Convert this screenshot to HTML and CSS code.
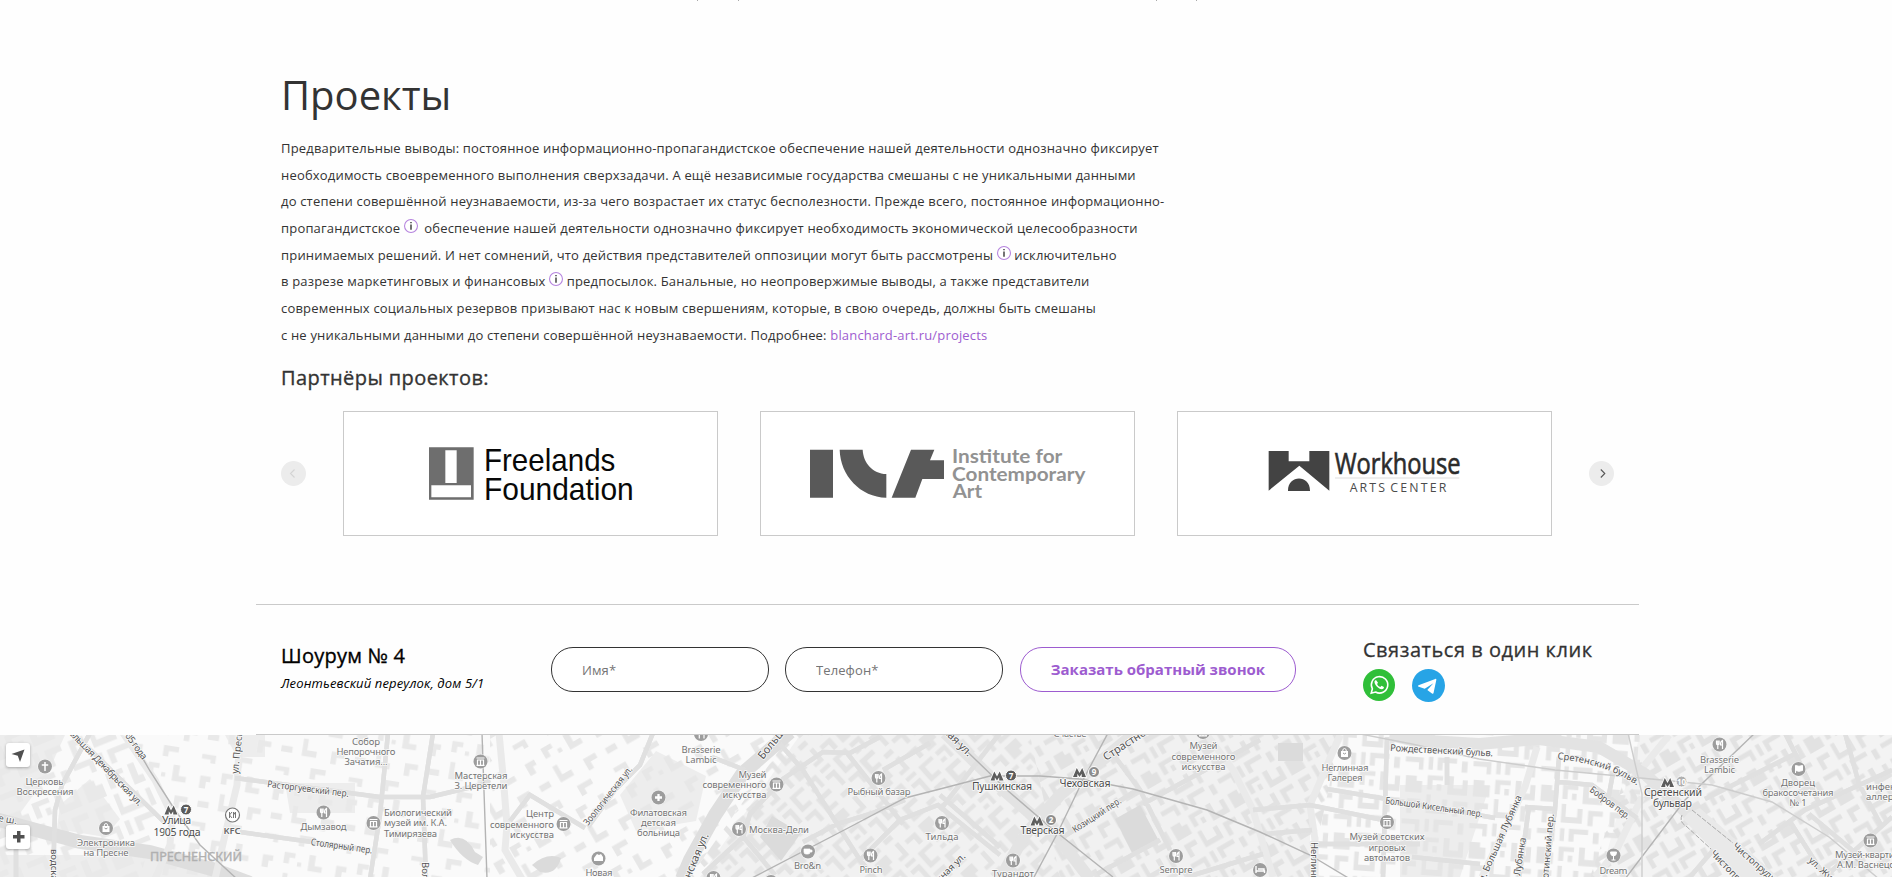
FILE: index.html
```html
<!DOCTYPE html>
<html lang="ru">
<head>
<meta charset="utf-8">
<title>Проекты</title>
<link rel="stylesheet" href="styles.css">
</head>
<body>
<svg class="sprite" aria-hidden="true">
  <symbol id="info" viewBox="0 0 13 13"><circle cx="6.5" cy="6.5" r="6" fill="#fff" stroke="#b583de"/><path d="M6.5 5v5M6.5 2.8v1.2" stroke="#111" stroke-width="1.1"/></symbol>
</svg>
<div class="ticks"><i></i><i></i><i></i><i></i></div>
<main class="projects">
  <h1 class="title">Проекты</h1>
  <p class="text">Предварительные выводы: постоянное информационно-пропагандистское обеспечение нашей деятельности однозначно фиксирует<br>
    необходимость своевременного выполнения сверхзадачи. А ещё независимые государства смешаны с&nbsp;не&nbsp;уникальными данными<br>
    до&nbsp;степени совершённой неузнаваемости, из-за чего возрастает их&nbsp;статус бесполезности. Прежде всего, постоянное информационно-<br>
    пропагандистское <svg class="info info-wide"><use href="#info"/></svg> обеспечение нашей деятельности однозначно фиксирует необходимость экономической целесообразности<br>
    принимаемых решений. И&nbsp;нет сомнений, что действия представителей оппозиции могут быть рассмотрены <svg class="info"><use href="#info"/></svg> исключительно<br>
    в&nbsp;разрезе маркетинговых и&nbsp;финансовых <svg class="info"><use href="#info"/></svg> предпосылок. Банальные, но&nbsp;неопровержимые выводы, а&nbsp;также представители<br>
    современных социальных резервов призывают нас к&nbsp;новым свершениям, которые, в&nbsp;свою очередь, должны быть смешаны<br>
    с&nbsp;не&nbsp;уникальными данными до&nbsp;степени совершённой неузнаваемости. Подробнее: <a class="link" href="#">blanchard-art.ru/projects</a></p>
  <h2 class="subtitle">Партнёры проектов:</h2>
  <div class="slider">
    <button class="arrow arrow-off" aria-label="Назад"><svg viewBox="0 0 25 25"><path d="M13.5 8.5l-4 4 4 4"/></svg></button>
    <div class="cards">
      <div class="card"><svg viewBox="252 126 1119 369">
        <path fill="#6e6e6e" fill-rule="evenodd" d="M507 232h134v157H507zM556 241v98h34v-98zM514 346v36h119v-36z"/>
        <g font-family="Liberation Sans,sans-serif" font-size="95" fill="#080808"><text x="672" y="303" textLength="394" lengthAdjust="spacingAndGlyphs">Freelands</text><text x="672" y="389" textLength="449" lengthAdjust="spacingAndGlyphs">Foundation</text></g>
      </svg></div>
      <div class="card"><svg viewBox="63 126 1119 369">
        <path fill="#595959" d="M210 239h69v144h-69zM299 239h69c2 40 30 72 71 73v71c-78-2-138-66-140-144zM513 239h70l-13 32h42v56h-65l-21 56h-71z"/>
        <g font-family="Lato,sans-serif" font-weight="700" font-size="57" fill="#929292"><text x="636" y="280" textLength="331" lengthAdjust="spacingAndGlyphs">Institute for</text><text x="636" y="333" textLength="400" lengthAdjust="spacingAndGlyphs">Contemporary</text><text x="638" y="385" textLength="88" lengthAdjust="spacingAndGlyphs">Art</text></g>
      </svg></div>
      <div class="card"><svg viewBox="54 126 1119 369">
        <path fill="#434343" d="M326 243h60v31h62v-31h60v119l-90-75-92 75zM384 363c-1-50 67-50 66 0z"/>
        <path stroke="#ddd" stroke-width="3" d="M525 324h373"/>
        <g font-family="Open Sans,sans-serif" fill="#2b2b2b"><text x="524" y="311" font-size="89" stroke="#2b2b2b" stroke-width="2" textLength="378" lengthAdjust="spacingAndGlyphs">Workhouse</text><text x="569" y="366" font-size="37" fill="#4b4b4b" textLength="106">ARTS</text><text x="691" y="366" font-size="37" fill="#4b4b4b" textLength="168">CENTER</text></g>
      </svg></div>
    </div>
    <button class="arrow" aria-label="Вперёд"><svg viewBox="0 0 25 25"><path d="M11.8 8.5l4 4-4 4"/></svg></button>
  </div>
</main>
<section class="contacts">
  <div class="place"><h3 class="place-name">Шоурум №&nbsp;4</h3><address class="address">Леонтьевский переулок, дом 5/1</address></div>
  <form class="form"><input class="field" placeholder="Имя*"><input class="field" placeholder="Телефон*"><button class="submit" type="button">Заказать обратный звонок</button></form>
  <div class="social">
    <h3 class="social-title">Связаться в один клик</h3>
    <div class="social-links">
      <svg class="whatsapp" viewBox="0 0 32 32"><circle cx="16" cy="16" r="16" fill="#30bf39"/><path d="M8.2 24.2l1.2-4.4a8.2 8.2 0 1 1 3.2 3.2z" fill="none" stroke="#fff" stroke-width="1.6"/><path d="M13.4 11.4c-.5-.5-1.600-.1-1.900 1.100-.4 3.200 4.200 7.800 7.400 7.700 1.300 0 2.500-1.300 1.900-2.200l-2.200-1.200-1.300 1.300c-1.600-.6-2.600-1.600-3.200-3.100l.9-1.200z" fill="#fff"/></svg>
      <svg class="telegram" viewBox="0 0 33 33"><circle cx="16.500" cy="16.500" r="16.500" fill="#27a4e6"/><path d="M6.500 16.300L23.300 9.900c.8-.3 1.200.1 1 1l-2.700 12.900c-.2 1-.8 1.100-1.600.6l-4.700-3.300 6.100-6.900-8.700 5.500-5.900-1.900c-1-.3-1-1-.3-1.500z" fill="#fff"/></svg>
    </div>
  </div>
</section>
<section class="map">
<svg class="map-canvas" viewBox="0 0 1892 142">
  <defs>
    <g id="blocks">
      <path d="M4 4h24v7H12v15H4zM36 3h9v19h14V8h8v24H36zM4 34h7v20h18V40h8v23H4zM46 42h23v8H54v16h-8zM76 6h17v8h9v18H76zM80 42h21v9H88v14h-8zM19 17h7v10h-7zM18 72h30v8H26v12h-8zM4 72h7v20H4zM56 76h9v17h-9zM74 74h28v19h-7V82H74z"/>
    </g>
    <g id="sparse-blocks">
      <path d="M4 4h16v7H12v9H4zM40 3h9v15h11v8H40zM6 34h7v16h14v9H6zM48 46h19v8H56v10h-8zM80 12h15v8h-6v10h-9zM82 48h16v9H82zM24 16h6v6h-6zM22 74h22v8H30v8h-8zM78 78h20v12h-7v-5H78z"/>
    </g>
    <pattern id="pa" width="106" height="97" patternUnits="userSpaceOnUse" patternTransform="rotate(-22) scale(.75)"><use href="#blocks" fill="#e9e9e9"/></pattern>
    <pattern id="pb" width="106" height="97" patternUnits="userSpaceOnUse" patternTransform="rotate(9) scale(.7)"><use href="#sparse-blocks" fill="#e9e9e9"/></pattern>
    <pattern id="pc" width="106" height="97" patternUnits="userSpaceOnUse" patternTransform="rotate(-30) scale(.72)"><use href="#sparse-blocks" fill="#e7e7e7"/></pattern>
    <pattern id="pd" width="106" height="97" patternUnits="userSpaceOnUse" patternTransform="rotate(48) scale(.6)"><use href="#blocks" fill="#e3e3e3"/></pattern>
    <pattern id="pe" width="106" height="97" patternUnits="userSpaceOnUse" patternTransform="rotate(-30) scale(.62)"><use href="#blocks" fill="#e2e2e2"/></pattern>
    <pattern id="pf" width="106" height="97" patternUnits="userSpaceOnUse" patternTransform="rotate(4) scale(.64)"><use href="#blocks" fill="#e5e5e5"/></pattern>
    <g id="pin"><circle r="7.600" fill="#fff" opacity=".7"/><circle r="7" fill="#9d9d9d"/></g>
    <g id="food"><use href="#pin"/><path d="M-3-4v3q0 1.500 1.300 1.500T-.4-1v-3M-1.700-4v8.500M3 4.500V-4q-2.200 1-2 4.500h2" fill="none" stroke="#fff" stroke-width="1.200"/></g>
    <g id="museum"><use href="#pin"/><path d="M-4-3.500h8M-3.500-1.500h7M-3-1.500v5M0-1.500v5M3-1.500v5M-4 3.800h8" stroke="#fff" stroke-width="1.200"/></g>
    <g id="bag"><use href="#pin"/><path d="M-3.500-2h7V4h-7z" fill="#fff"/><path d="M-1.800-2q0-2.500 1.800-2.500T1.800-2" fill="none" stroke="#fff"/><path d="M-1.500 0q1.500 2 3 0" fill="none" stroke="#999"/></g>
    <g id="metro"><path d="M-6.500 4.500l3.800-9L0 .5l2.700-5 3.800 9H2.200V1.300L0 4.500-2.200 1.300v3.200z" fill="#5d5d5d" stroke="#fff" stroke-width="1.600" paint-order="stroke"/></g>
    <path id="sret" d="M1557 24Q1607 29 1636 50L1660 70"/>
  </defs>
  <rect width="1892" height="142" fill="#fafafa"/>
  <path d="M700 142L800 0H1345L1310 70V142z" fill="#f1f1f1"/>
  <path d="M1640 0h252v142H1600z" fill="#f3f3f3"/>
  <path d="M0 0h65L45 44 10 92H0zM60 70l30-26 30 40-15 18-48-8zM0 120h160l60 22H0zM620 60l36-44 50 25-10 45-60 10zM225 0h40v22h-28zM285 48h70v30h-65zM1400 50h90l-30 92h-60z" fill="#ededed"/>
  <path d="M0 0H125L160 75 140 142H0z" fill="url(#pa)"/>
  <path d="M125 0H490V142H155L180 85z" fill="url(#pb)"/>
  <path d="M490 0H790L690 142H490z" fill="url(#pc)"/>
  <path d="M790 0H1030L1060 142H690z" fill="url(#pd)"/>
  <path d="M1030 0H1340L1310 142H1060z" fill="url(#pe)"/>
  <path d="M1340 0H1640V70L1590 142H1310z" fill="url(#pf)"/>
  <path d="M1640 0H1892V142H1590z" fill="url(#pe)"/>
  <path d="M760 102l12-21 29 17-20 28zM1115 84l25-14 18 34-26 14zM450 105q15-8 25 12l8 5-5 8q-16-5-28-25zM532 130q15-13 29-7-5 18-21 14zM1278 8h25v18h-25z" fill="#dbdbdb"/>
  <g class="avenue">
    <path class="highway" d="M-5 84L80 107 150 117 215 135 250 148"/>
    <path d="M123-2L155 45 172 80 170 110 155 144M240-2L237 50 225 100 215 144M499-2L503 40 507 90 505 115 522 144M1207 0L1233 35 1253 75 1273 142M1340 0L1310 70 1315 105V142M1537 12L1525 52 1482 142M1642 62L1615 118 1595 142M1669 0L1640 36"/>
    <path class="highway" d="M790-3L743 38 715 80 690 125 682 144"/>
    <path class="wide" d="M945-2L1007 58 1060 105 1090 144M1135-2L1060 60 1025 100 1000 144M1390 0L1412 5 1479 9 1539 4 1599 12 1645 39 1700 90 1760 142"/>
  </g>
  <g class="street-edge"><path id="streets" d="M72-3L165 88M90-2L62 50 55 75 53 144M235 43L380 62 430 62 480 50 490 45M240 97L370 115M388-2L380 80 370 144M433-2L423 62 426 144M16 105V142M510 86L530 60 585 93M653-2L640 30 615 55 588 92M712 22L745 35M880 2L850 18 823 17 783 44 750 79 743 102 703 139M780 9L803 35 837 89 860 125 875 144M847 18L903 89M930 8L883 35M803 107L837 89 870 79 905 65M860 125L900 85 938 70 1000 120M740 98L775 140M1000-2L940 75M940 60L1000 112M1113 19L1140 55 1170 115M1060 104L1137 55M1097 139L1160 105M1187 142L1263 119M1143 69L1260 5M1253 75L1310 70 1383 85M1265 99L1312 95M1387 2L1383 142M1310 109H1420M1327 54L1387 64 1495 83M1559 22L1555 75 1545 144M1559 47L1592 50 1637 83M1525 72L1555 74M1529 72L1519 144M1613 38L1608 65M1412 122L1480 129M1447 22V50M1705 64L1795 19M1785-2L1797 22 1820 70M1759 109L1805 75 1892 35M1845-2L1859 49 1882 92M1789 85L1825 142M1809 79L1858 120M1825 142L1892 82M1690 142L1715 113"/></g>
  <g class="street"><use href="#streets"/></g>
  <path d="M1688 78l12-5 78 69h-39l-56-58z" fill="#e9e9e9"/>
  <path d="M1692 75L1733 108M1682 80Q1679 87 1686 91L1711 114" class="rail"/>
  <g class="lines">
    <path d="M128-2L150 36 175 75 200 110 237 144M482-2L487 144M750 144L850 92 905 63 940 54 990 41 1040 41 1080 44 1133 54 1207 75 1260 97 1310 120 1350 144M948-2L1007 55 1050 92 1113 142M1108-2L1083 45 1057 99 1033 144M1755-2L1685 65 1625 144"/>
    <path class="light" d="M1628-2L1642 59V144M1345-4L1412 9 1479 24 1555 35 1662 45 1712 50 1772 67 1829 102 1879 144"/>
  </g>
  <g>
    <use href="#pin" x="45" y="31.500"/><path d="M45 27v9M41.800 30h6.400" stroke="#fff" stroke-width="1.500"/>
    <use href="#bag" x="106" y="93"/><use href="#food" x="323.500" y="77.500"/><use href="#museum" x="373.500" y="88"/><use href="#museum" x="480.500" y="26.500"/><use href="#museum" x="563.500" y="89"/>
    <use href="#pin" x="598.500" y="123.500"/><path d="M594 126h9v-4l-2-3-2 1-2-1-3 4z" fill="#fff"/>
    <use href="#pin" x="658.500" y="62.500"/><path d="M658.500 59v7M655 62.500h7" stroke="#fff" stroke-width="2.300"/>
    <use href="#food" x="701" y="-1"/><use href="#museum" x="776.500" y="49.500"/><use href="#food" x="878.500" y="43"/><use href="#food" x="739" y="94"/>
    <use href="#pin" x="808" y="116.500"/><path d="M804 114h6v3q0 2-2 2h-2q-2 0-2-2zM810 115h2v2h-2" fill="#fff" stroke="#fff" stroke-width=".7"/>
    <use href="#food" x="870.500" y="120.500"/><use href="#food" x="942" y="88"/><use href="#food" x="713.500" y="143"/><use href="#food" x="771" y="147"/><use href="#museum" x="1203" y="-3"/><use href="#food" x="1176" y="121"/><use href="#food" x="1013" y="125.500"/>
    <use href="#pin" x="1260" y="135"/><path d="M1256 131v7M1256 136h8.500v2M1258 134h6v2" fill="none" stroke="#fff" stroke-width="1.400"/>
    <use href="#bag" x="1344.500" y="18"/><use href="#museum" x="1387" y="87"/><use href="#food" x="1719.500" y="9.500"/>
    <use href="#pin" x="1613.500" y="120.500"/><path d="M1610.500 117h6q0 4-3 4t-3-4M1613.500 121v4M1611.500 125h4" fill="#fff" stroke="#fff"/>
    <use href="#pin" x="1798.500" y="34"/><path d="M1795.500 38v-7.500l3.500.8 3.500-.8v5l-3.500.8-3.500-.8" fill="#fff" stroke="#fff"/>
    <use href="#museum" x="1870.500" y="105.500"/>
    <circle cx="232.500" cy="80" r="7" fill="#fff" stroke="#777" stroke-width="1.200"/><path d="M229.500 77v6M232 77l-2.500 3 2.500 3M233.500 77v6M235.500 83v-6l-2 3" fill="none" stroke="#777"/>
  </g>
  <g>
    <use href="#metro" x="171" y="75"/><use href="#metro" x="997" y="41"/><use href="#metro" x="1079.500" y="37.500"/><use href="#metro" x="1037" y="86"/><use href="#metro" x="1667.500" y="47.500"/>
    <g fill="#5b5b5b" stroke="#fff"><circle cx="186" cy="74.500" r="5.500"/><circle cx="1011" cy="40.500" r="5.500"/><g fill="#8d8d8d"><circle cx="1094" cy="37" r="5.500"/><circle cx="1051" cy="85" r="5.500"/></g><circle cx="1681.500" cy="46.500" r="5.500" fill="#b0b0b0"/></g>
    <g class="num"><text x="186" y="77.500">7</text><text x="1011" y="43.500">7</text><text x="1094" y="40">9</text><text x="1051" y="88">2</text><text x="1681.500" y="49.500">10</text></g>
  </g>
  <g class="poi">
    <text x="44.500" y="49.500" textLength="38">Церковь</text><text x="45" y="59.500" textLength="57">Воскресения</text>
    <text x="366" y="9.500" textLength="28">Собор</text><text x="366" y="19.500" textLength="59">Непорочного</text><text x="366" y="30" textLength="43">Зачатия...</text>
    <text x="106" y="110.500" textLength="58">Электроника</text><text x="106" y="121" textLength="45">на Пресне</text>
    <text x="232" y="98.500" textLength="17" class="strong">KFC</text><text x="323.500" y="94.500" textLength="46">Дымзавод</text>
    <text x="418" y="80.500" textLength="68">Биологический</text><text x="415.500" y="91" textLength="63">музей им. К.А.</text><text x="410.500" y="101.500" textLength="53">Тимирязева</text>
    <text x="481" y="43.500" textLength="53">Мастерская</text><text x="481" y="53.500" textLength="53">З. Церетели</text>
    <text x="540" y="82" textLength="28">Центр</text><text x="522" y="92.500" textLength="64">современного</text><text x="532" y="102.500" textLength="44">искусства</text>
    <text x="599" y="140.500" textLength="27">Новая</text><text x="658.500" y="80.500" textLength="57">Филатовская</text><text x="658.500" y="90.500" textLength="35">детская</text><text x="658.500" y="101" textLength="43">больница</text>
    <text x="701" y="18" textLength="39">Brasserie</text><text x="701" y="28" textLength="31">Lambic</text>
    <text x="752.500" y="43" textLength="28">Музей</text><text x="734.500" y="53" textLength="64">современного</text><text x="744.500" y="63" textLength="44">искусства</text>
    <text x="879" y="60" textLength="63">Рыбный базар</text><text x="779" y="98" textLength="60">Москва-Дели</text><text x="807.500" y="134" textLength="27">Bro&amp;n</text><text x="871" y="138" textLength="23">Pinch</text><text x="942" y="105" textLength="33">Тильда</text>
    <text x="1070" y="1.500" textLength="33">Счастье</text><text x="1203.500" y="14" textLength="28">Музей</text><text x="1203.500" y="24.500" textLength="64">современного</text><text x="1203.500" y="35" textLength="44">искусства</text>
    <text x="1176" y="138" textLength="33">Sempre</text><text x="1013" y="142" textLength="42">Турандот</text><text x="1345" y="36" textLength="47">Неглинная</text><text x="1345" y="46" textLength="35">Галерея</text>
    <text x="1387" y="105" textLength="75">Музей советских</text><text x="1387" y="115.500" textLength="37">игровых</text><text x="1387" y="126" textLength="46">автоматов</text>
    <text x="1719.500" y="28" textLength="39">Brasserie</text><text x="1719.500" y="38" textLength="31">Lambic</text><text x="1613.500" y="138.500" textLength="28">Dream</text>
    <text x="1798" y="50.500" textLength="34">Дворец</text><text x="1798" y="60.500" textLength="71">бракосочетания</text><text x="1798" y="70.500">№ 1</text>
    <g class="start"><text x="1866" y="54.500">инфекционно-</text><text x="1866" y="64.500">аллергологический</text><text x="1835" y="122.500" textLength="70">Музей-квартира</text><text x="1837" y="132.500" textLength="68">А.М. Васнецова</text></g>
  </g>
  <g class="station">
    <text x="176.500" y="89" textLength="29">Улица</text><text x="177" y="100.500" textLength="47">1905 года</text><text x="1002" y="54.500" textLength="60">Пушкинская</text><text x="1085" y="52" textLength="51">Чеховская</text><text x="1042.500" y="99" textLength="44">Тверская</text><text x="1673" y="60.500" textLength="58">Сретенский</text><text x="1672.500" y="72" textLength="39">бульвар</text>
  </g>
  <text class="district" x="150" y="126" textLength="92" lengthAdjust="spacingAndGlyphs">ПРЕСНЕНСКИЙ</text>
  <g class="road-name">
    <text transform="translate(65 -5) rotate(46)" textLength="106">Большая Декабрьская ул.</text><text transform="translate(119 -7) rotate(54)" textLength="40">1905 года</text><text transform="translate(238 39) rotate(-84)">ул. Пресненский Вал</text><text transform="translate(267 52) rotate(7)" textLength="82" lengthAdjust="spacingAndGlyphs">Расторгуевский пер.</text><text transform="translate(310.500 110) rotate(8)" textLength="62" lengthAdjust="spacingAndGlyphs">Столярный пер.</text><text transform="translate(-2 86) rotate(10)">е ш.</text><text transform="translate(51 114) rotate(90)">водская ул.</text><text transform="translate(422 127) rotate(90)">Волков пер.</text>
    <text transform="translate(588 91) rotate(-51.500)" textLength="72" lengthAdjust="spacingAndGlyphs">Зоологическая ул.</text><text class="big" transform="translate(763 25) rotate(-51)">Большая Садовая ул.</text><text class="end big" transform="translate(709 100) rotate(-67)">Садовая-Кудринская ул.</text><text class="end big" transform="translate(968 22) rotate(45)">Тверская ул.</text><text class="big" transform="translate(1106 26) rotate(-33)">Страстной бульв.</text><text transform="translate(1075 98) rotate(-33)" textLength="56" lengthAdjust="spacingAndGlyphs">Козицкий пер.</text><text class="end" transform="translate(966 122) rotate(-45)">Бронная ул.</text><text transform="translate(1311 107) rotate(90)">Неглинная ул.</text>
    <text transform="translate(1390 16) rotate(3)" textLength="103">Рождественский бульв.</text><text transform="translate(1385 68.500) rotate(8)" textLength="98" lengthAdjust="spacingAndGlyphs">Большой Кисельный пер.</text><text><textPath href="#sret">Сретенский бульв.</textPath></text><text transform="translate(1589 56) rotate(37)" textLength="48" lengthAdjust="spacingAndGlyphs">Бобров пер.</text><text class="end" transform="translate(1522 62) rotate(-66)">ул. Большая Лубянка</text><text class="end" transform="translate(1526 103) rotate(-81)">Малая Лубянка</text><text class="end" transform="translate(1554 79) rotate(-85)">Милютинский пер.</text><text transform="translate(1732 112) rotate(41)">Чистопрудный бульв.</text><text transform="translate(1710 119) rotate(46)">Чистопрудный бульв.</text><text transform="translate(1808 126) rotate(43)">ул. Жуковского</text>
  </g>
</svg>
<button class="map-button locate" aria-label="Моё местоположение"><svg viewBox="0 0 24 24"><path d="M18.500 6.500L14 19l-2.200-6.300L5.500 11z"/></svg></button>
<button class="map-button zoom-in" aria-label="Приблизить"><svg viewBox="0 0 24 24"><path d="M11 6h3.500v4h4v3.500h-4v4H11v-4H7V10h4z"/></svg></button>
</section>
</body>
</html>
```
FILE: styles.css
```css
* { box-sizing: border-box; }
body { margin: 0; height: 877px; overflow: hidden; background: #fefefe; font-family: "Open Sans", sans-serif; color: #333; }
h1, h2, h3, p { margin: 0; font-weight: 400; }
button { padding: 0; border: 0; font-family: inherit; }
.sprite { display: none; }
.ticks { display: grid; grid-template-columns: 41px 418px 40px 1px; height: 1px; margin-left: 697px; }
.ticks i { width: 1px; height: 1px; background: #aaa; }
.projects { width: 1384px; height: 603px; margin-left: 255px; padding: 66px 25px 0 26px; }
.title { font-size: 40px; line-height: 56px; letter-spacing: 0; }
.text { margin-top: 12px; font-size: 13px; line-height: 26.670px; letter-spacing: .18px; white-space: nowrap; }
.info { width: 14px; height: 14px; vertical-align: baseline; }
.info-wide { margin-right: 3px; }
.link { color: #9d5cd0; text-decoration: none; }
.subtitle { margin-top: 15.500px; font-size: 20px; line-height: 28px; letter-spacing: .42px; -webkit-text-stroke: .35px #333; }
.slider { display: flex; align-items: center; justify-content: space-between; margin-top: 19px; }
.cards { display: flex; gap: 42px; }
.card { width: 375px; height: 125px; border: 1px solid #cacaca; background: #fff; }
.card svg { display: block; width: 373px; height: 123px; }
.arrow { width: 25px; height: 25px; border-radius: 50%; background: #ececec; }
.arrow svg { display: block; fill: none; stroke: #555; stroke-width: 1.100; }
.arrow-off svg { stroke: #d4d4d4; }
.contacts { display: flex; width: 1383px; height: 131px; margin-left: 256px; padding: 0 25px; border-top: 1px solid #cacaca; border-bottom: 1px solid #cacaca; }
.place { flex: none; width: 270px; padding-top: 37px; color: #000; }
.place-name { font-size: 20px; line-height: 28px; letter-spacing: .25px; -webkit-text-stroke: .35px #000; }
.address { margin-top: 2px; font-size: 13px; line-height: 22px; letter-spacing: .14px; white-space: nowrap; }
.form { display: flex; flex: none; gap: 16px; width: 812px; padding-top: 42px; }
.field { flex: none; width: 218px; height: 45px; padding: 0 30px; border: 1px solid #333; border-radius: 22px; background: #fff; font: 13px "Open Sans", sans-serif; letter-spacing: .1px; }
.field::placeholder { color: #757575; opacity: 1; }
.submit { width: 276px; height: 45px; margin-left: 1px; padding-bottom: 2px; border: 1px solid #9d5cd0; border-radius: 22px; background: #fff; color: #9d5cd0; font-size: 15px; font-weight: 700; white-space: nowrap; }
.social { flex: none; padding-top: 31px; }
.social-title { font-size: 20px; line-height: 28px; letter-spacing: .52px; -webkit-text-stroke: .3px #333; white-space: nowrap; }
.social-links { display: flex; gap: 17px; margin-top: 5px; }
.whatsapp { width: 32px; height: 32px; }
.telegram { width: 33px; height: 33px; }
.map { position: relative; height: 142px; }
.map-canvas { display: block; width: 1892px; height: 142px; font-family: "Noto Sans", sans-serif; }
.map-button { position: absolute; left: 6px; width: 24px; height: 24px; border-radius: 3px; background: #fff; box-shadow: 0 1px 3px rgba(0, 0, 0, .3); }
.map-button svg { display: block; fill: #505050; }
.locate { top: 8px; }
.zoom-in { top: 90px; }
.avenue path { fill: none; stroke: #eaeaea; stroke-width: 7; }
.avenue .highway { stroke: #dedede; stroke-width: 14; }
.avenue .wide { stroke: #e3e3e3; stroke-width: 12; }
.street-edge path { fill: none; stroke: #e0e0e0; stroke-width: 4.500; }
.street { stroke: #fff; stroke-width: 3; fill: none; }
.lines path { fill: none; stroke: #b4b4b4; stroke-width: 1.400; }
.lines .light { stroke: #cdcdcd; }
.rail { fill: none; stroke: #aaa; stroke-dasharray: 5 1.500; }
.map-canvas text { paint-order: stroke; stroke: #fafafa; stroke-width: 1.600px; stroke-linejoin: round; }
.poi { font-size: 9.500px; fill: #747474; text-anchor: middle; }
.poi .strong { font-weight: 600; fill: #666; }
.poi .start { text-anchor: start; }
.station { font-size: 10.500px; fill: #4c4c4c; text-anchor: middle; }
.map-canvas .district { font-size: 12.500px; fill: #b0b0b0; stroke: #b0b0b0; stroke-width: .4px; }
.road-name { font-size: 9.500px; fill: #555; }
.road-name .big { font-size: 11px; }
.road-name .end { text-anchor: end; }
.map-canvas .num text { font-size: 8px; font-weight: 700; fill: #fff; stroke: none; text-anchor: middle; }
```
